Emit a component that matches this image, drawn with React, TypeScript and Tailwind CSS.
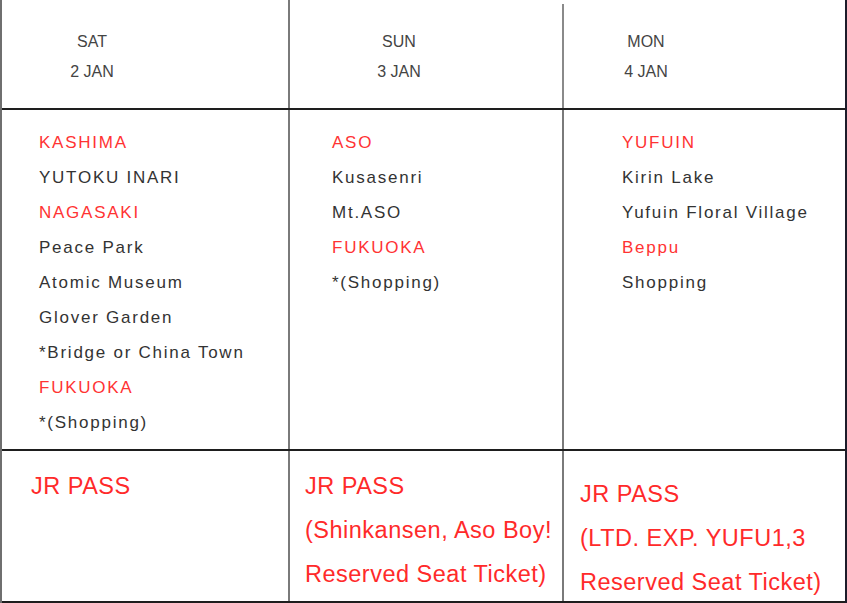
import type { ReactNode } from "react";

type Stop = { text: string; red?: boolean };

const days: Array<{
  day: string;
  date: string;
  headPad: string;
  bodyPad: string;
  stops: Stop[];
  pass: string[];
  passPad: string;
}> = [
  {
    day: "SAT",
    date: "2 JAN",
    headPad: "w-[180px]",
    bodyPad: "pl-[37px]",
    stops: [
      { text: "KASHIMA", red: true },
      { text: "YUTOKU INARI" },
      { text: "NAGASAKI", red: true },
      { text: "Peace Park" },
      { text: "Atomic Museum" },
      { text: "Glover Garden" },
      { text: "*Bridge or China Town" },
      { text: "FUKUOKA", red: true },
      { text: "*(Shopping)" },
    ],
    pass: ["JR PASS"],
    passPad: "pl-[29px] pt-[13px]",
  },
  {
    day: "SUN",
    date: "3 JAN",
    headPad: "w-[218px]",
    bodyPad: "pl-[42px]",
    stops: [
      { text: "ASO", red: true },
      { text: "Kusasenri" },
      { text: "Mt.ASO" },
      { text: "FUKUOKA", red: true },
      { text: "*(Shopping)" },
    ],
    pass: ["JR PASS", "(Shinkansen, Aso Boy!", "Reserved Seat Ticket)"],
    passPad: "pl-[15px] pt-[13px]",
  },
  {
    day: "MON",
    date: "4 JAN",
    headPad: "w-[164px]",
    bodyPad: "pl-[58px]",
    stops: [
      { text: "YUFUIN", red: true },
      { text: "Kirin Lake" },
      { text: "Yufuin Floral Village" },
      { text: "Beppu", red: true },
      { text: "Shopping" },
    ],
    pass: ["JR PASS", "(LTD. EXP. YUFU1,3", "Reserved Seat Ticket)"],
    passPad: "pl-[16px] pt-[21px]",
  },
];

const colWidths = ["w-[288px]", "w-[274px]", "flex-1"];

function Cell({ i, children, className = "" }: { i: number; children: ReactNode; className?: string }) {
  return (
    <div
      className={`${colWidths[i]} ${i < 2 ? "border-r-2 border-[#7a7a7a]" : ""} ${className}`}
    >
      {children}
    </div>
  );
}

export default function App() {
  return (
    <div
      className="flex h-[603px] w-[847px] flex-col overflow-hidden border-l-2 border-r-2 border-l-[#6f6f6f] border-r-[#1c1c2a] bg-white"
      style={{ fontFamily: '"Liberation Sans", Arial, sans-serif' }}
    >
      {/* header row */}
      <div className="flex h-[110px] shrink-0 border-b-2 border-[#1e1e1e]">
        {days.map((d, i) => (
          <div key={d.day} className={`${colWidths[i]} flex`}>
            <div className="flex-1 pt-[27px]">
              <div className={`${d.headPad} text-center text-[16px] leading-[30px] text-[#444444]`}>
                <div>{d.day}</div>
                <div>{d.date}</div>
              </div>
            </div>
            {i === 0 && <div className="w-[2px] bg-[#7a7a7a]" />}
            {i === 1 && <div className="mt-[4px] w-[2px] bg-[#8a8a8a]" />}
          </div>
        ))}
      </div>

      {/* stops */}
      <div className="flex h-[341px] shrink-0 border-b-2 border-[#1e1e1e]">
        {days.map((d, i) => (
          <Cell key={d.day} i={i} className={`${d.bodyPad} pt-[15px]`}>
            {d.stops.map((s) => (
              <div
                key={s.text}
                className={`text-[17px] leading-[35px] tracking-[1.75px] ${
                  s.red ? "text-[#ff3333]" : "text-[#333333]"
                }`}
              >
                {s.text}
              </div>
            ))}
          </Cell>
        ))}
      </div>

      {/* passes */}
      <div className="flex min-h-0 flex-1 border-b-2 border-[#1e1e1e]">
        {days.map((d, i) => (
          <Cell key={d.day} i={i} className={d.passPad}>
            {d.pass.map((line) => (
              <div key={line} className="text-[23.5px] leading-[44px] tracking-[0.5px] text-[#ff2a2a]">
                {line}
              </div>
            ))}
          </Cell>
        ))}
      </div>
    </div>
  );
}
